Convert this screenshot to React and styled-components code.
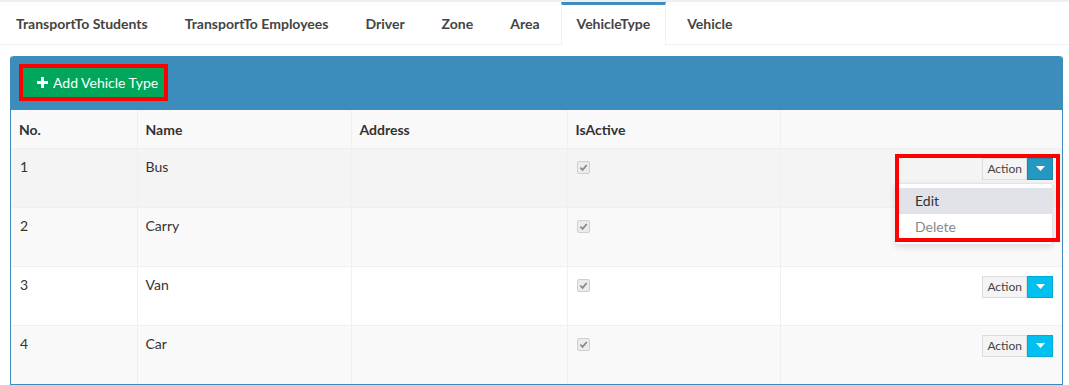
import React from 'react'
import styled, { createGlobalStyle } from 'styled-components'

const GlobalStyle = createGlobalStyle`
  body {
    margin: 0;
    background: #ffffff;
    font-family: Lato, "Open Sans", sans-serif;
    color: #333;
  }
`;

const tabs = ['TransportTo Students', 'TransportTo Employees', 'Driver', 'Zone', 'Area', 'VehicleType', 'Vehicle'];

const rows = [
    { no: 1, name: 'Bus', bg: '#f4f4f4', open: true },
    { no: 2, name: 'Carry', bg: '#f9f9f9', hidden: true },
    { no: 3, name: 'Van', bg: '#ffffff' },
    { no: 4, name: 'Car', bg: '#f9f9f9' },
];

function Check() {
    return (
        <CheckBox>
            <svg width="9" height="9" viewBox="0 0 10 10">
                <path d="M1.5 5.2 L4 7.6 L8.6 2.2" fill="none" stroke="#8a8a8a" strokeWidth="2" />
            </svg>
        </CheckBox>
    )
}

function Caret() {
    return (
        <svg width="9" height="5" viewBox="0 0 9 5">
            <path d="M0 0 L9 0 L4.5 5 Z" fill="#fff" />
        </svg>
    )
}

function App() {
    return (
        <Page>
            <GlobalStyle />
            <TopStrip />
            <TabBar>
                {tabs.map(t => (
                    <Tab key={t} active={t === 'VehicleType'}>{t}</Tab>
                ))}
            </TabBar>
            <Content>
                <Panel>
                    <PanelHeader>
                        <AddButton>
                            <svg width="11" height="11" viewBox="0 0 11 11">
                                <path d="M4 0 H7 V4 H11 V7 H7 V11 H4 V7 H0 V4 H4 Z" fill="#fff" />
                            </svg>
                            <span>Add Vehicle Type</span>
                        </AddButton>
                    </PanelHeader>
                    <Table>
                        <colgroup>
                            <col style={{ width: 126 }} />
                            <col style={{ width: 214 }} />
                            <col style={{ width: 216 }} />
                            <col style={{ width: 213 }} />
                            <col />
                        </colgroup>
                        <thead>
                            <tr>
                                <Th>No.</Th>
                                <Th>Name</Th>
                                <Th>Address</Th>
                                <Th>IsActive</Th>
                                <Th />
                            </tr>
                        </thead>
                        <tbody>
                            {rows.map(r => (
                                <Row key={r.no} bg={r.bg}>
                                    <Td>{r.no}</Td>
                                    <Td>{r.name}</Td>
                                    <Td />
                                    <Td><Check /></Td>
                                    <ActionCell>
                                        {!r.hidden && (
                                            <ActionGroup>
                                                <ActionBtn>Action</ActionBtn>
                                                <CaretBtn open={r.open}><Caret /></CaretBtn>
                                                {r.open && (
                                                    <>
                                                        <Menu>
                                                            <MenuItem active>Edit</MenuItem>
                                                            <MenuItem muted>Delete</MenuItem>
                                                        </Menu>
                                                        <MenuFrame />
                                                    </>
                                                )}
                                            </ActionGroup>
                                        )}
                                    </ActionCell>
                                </Row>
                            ))}
                        </tbody>
                    </Table>
                </Panel>
            </Content>
        </Page>
    )
}

export default App

const Page = styled.div`
width: 1069px;
height: 385px;
overflow: hidden;
background: #fff;
`;

const TopStrip = styled.div`
height: 2px;
background: #ecf0f5;
`;

const TabBar = styled.div`
display: flex;
height: 42px;
border-bottom: 1px solid #f0f0f0;
background: #fff;
`;

const Tab = styled.div`
display: flex;
align-items: center;
box-sizing: border-box;
padding: 0 15px 3px;
margin-right: 5px;
font-size: 14px;
font-weight: 700;
color: #444;
white-space: nowrap;
border-top: 3px solid ${p => (p.active ? '#3c8dbc' : 'transparent')};
border-left: 1px solid ${p => (p.active ? '#f0f0f0' : 'transparent')};
border-right: 1px solid ${p => (p.active ? '#f0f0f0' : 'transparent')};
height: ${p => (p.active ? '43px' : '42px')};
background: #fff;
`;

const Content = styled.div`
padding: 11px 6px 0 10px;
`;

const Panel = styled.div`
border: 1px solid #3c8dbc;
border-top: none;
border-radius: 3px 3px 0 0;
background: #fff;
`;

const PanelHeader = styled.div`
box-sizing: border-box;
height: 54px;
background: #3c8dbc;
padding: 12px 12px;
border-radius: 3px 3px 0 0;
`;

const AddButton = styled.button`
display: inline-flex;
align-items: center;
gap: 5px;
height: 29px;
width: 141px;
box-sizing: border-box;
padding: 0 0 0 14px;
border: none;
background: #00a65a;
color: #fff;
font-family: Lato, "Open Sans", sans-serif;
font-size: 14px;
outline: 4px solid #ff0000;
`;

const Table = styled.table`
width: 100%;
border-collapse: collapse;
table-layout: fixed;
font-size: 14px;
`;

const Th = styled.th`
height: 38px;
box-sizing: border-box;
padding: 1px 8px 0;
text-align: left;
font-weight: 700;
color: #333;
background: #f9f9f9;
border-left: 1px solid #f0f0f0;
&:first-child { border-left: none; }
`;

const Row = styled.tr`
background: ${p => p.bg};
border-top: 1px solid #f0f0f0;
`;

const Td = styled.td`
height: 59px;
box-sizing: border-box;
padding: 8px 8px;
vertical-align: top;
line-height: 20px;
color: #333;
border-left: 1px solid #f0f0f0;
&:first-child { border-left: none; padding-left: 9px; }
`;

const ActionCell = styled(Td)`
text-align: right;
padding-right: 9px;
padding-top: 9px;
`;

const CheckBox = styled.span`
display: inline-flex;
align-items: center;
justify-content: center;
width: 11px;
height: 11px;
margin: 4px 0 0 1px;
border: 1px solid #cfcfcf;
border-radius: 2px;
background: #ececec;
`;

const ActionGroup = styled.div`
position: relative;
display: inline-flex;
height: 22px;
`;

const ActionBtn = styled.div`
display: flex;
align-items: center;
box-sizing: border-box;
height: 22px;
padding: 0 4px;
font-size: 12px;
color: #444;
background: #f4f4f4;
border: 1px solid #ddd;
`;

const CaretBtn = styled.div`
display: flex;
align-items: center;
justify-content: center;
width: 26px;
height: 22px;
background: ${p => (p.open ? '#2598c2' : '#00c0ef')};
border: 1px solid ${p => (p.open ? '#1f86ad' : '#00acd6')};
box-sizing: border-box;
`;

const Menu = styled.div`
position: absolute;
top: 25px;
right: 0;
width: 158px;
box-sizing: border-box;
padding: 4px 0;
background: #fff;
border: 1px solid #e4e4e4;
border-radius: 3px;
box-shadow: 0 2px 6px rgba(0, 0, 0, 0.12);
text-align: left;
z-index: 2;
`;

const MenuItem = styled.div`
height: 26px;
line-height: 26px;
padding: 0 19px;
font-size: 14px;
color: ${p => (p.muted ? '#888' : '#333')};
background: ${p => (p.active ? '#e1e3e9' : 'transparent')};
`;

const MenuFrame = styled.div`
position: absolute;
left: -87px;
top: -4px;
width: 165px;
height: 88px;
box-sizing: border-box;
border: 4px solid #ff0000;
z-index: 3;
pointer-events: none;
`;
